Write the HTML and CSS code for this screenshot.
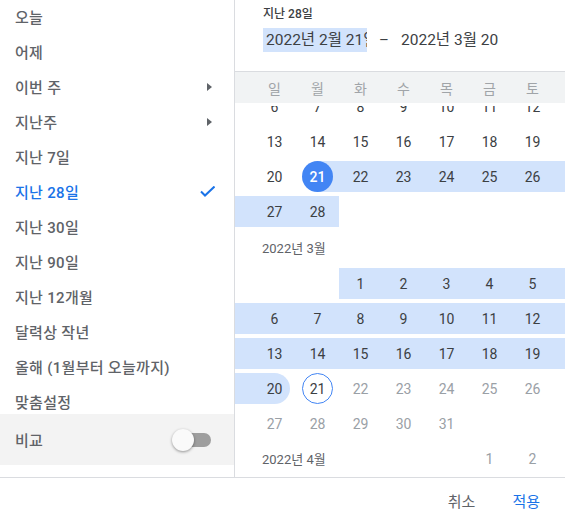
FILE: index.html
```html
<!DOCTYPE html>
<html lang="ko">
<head>
<meta charset="utf-8">
<title>날짜 범위</title>
<link rel="stylesheet" href="styles.css">
</head>
<body>
<div class="app">
  <div class="main">
    <aside class="presets">
      <ul class="preset-list">
        <li class="item">오늘</li>
        <li class="item">어제</li>
        <li class="item">이번 주<span class="caret"></span></li>
        <li class="item">지난주<span class="caret"></span></li>
        <li class="item">지난 7일</li>
        <li class="item selected">지난 28일<svg class="check" width="15" height="11" viewBox="0 0 15 11"><path d="M1 5.5 L5 9.5 L14.5 0.5" fill="none" stroke="#1a73e8" stroke-width="2"/></svg></li>
        <li class="item">지난 30일</li>
        <li class="item">지난 90일</li>
        <li class="item">지난 12개월</li>
        <li class="item">달력상 작년</li>
        <li class="item">올해 (1월부터 오늘까지)</li>
        <li class="item">맞춤설정</li>
      </ul>
      <div class="compare">
        <span>비교</span>
        <span class="toggle"><span class="track"></span><span class="thumb"></span></span>
      </div>
    </aside>

    <section class="cal-pane">
      <div class="range-head">
        <div class="range-label">지난 28일</div>
        <div class="range-fields">
          <span class="date-field selected-text">2022년 2월 21일</span>
          <span class="dash">–</span>
          <span class="date-field second">2022년 3월 20일</span>
        </div>
      </div>
      <div class="row weekdays">
        <span></span><span class="wd">일</span><span class="wd">월</span><span class="wd">화</span><span class="wd">수</span><span class="wd">목</span><span class="wd">금</span><span class="wd">토</span><span></span>
      </div>
      <div class="cal-view">
        <div class="cal-inner">
          <div class="row">
            <span></span><span class="d">6</span><span class="d">7</span><span class="d">8</span><span class="d">9</span><span class="d">10</span><span class="d">11</span><span class="d">12</span><span></span>
          </div>
          <div class="row">
            <span></span><span class="d">13</span><span class="d">14</span><span class="d">15</span><span class="d">16</span><span class="d">17</span><span class="d">18</span><span class="d">19</span><span></span>
          </div>
          <div class="row">
            <span></span><span class="d">20</span><span class="d start"><span class="dot">21</span></span><span class="d in">22</span><span class="d in">23</span><span class="d in">24</span><span class="d in">25</span><span class="d in">26</span><span class="in"></span>
          </div>
          <div class="row">
            <span class="in"></span><span class="d in">27</span><span class="d in">28</span><span></span><span></span><span></span><span></span><span></span><span></span>
          </div>
          <div class="month-label">2022년 3월</div>
          <div class="row">
            <span></span><span></span><span></span><span class="d in">1</span><span class="d in">2</span><span class="d in">3</span><span class="d in">4</span><span class="d in">5</span><span class="in"></span>
          </div>
          <div class="row">
            <span class="in"></span><span class="d in">6</span><span class="d in">7</span><span class="d in">8</span><span class="d in">9</span><span class="d in">10</span><span class="d in">11</span><span class="d in">12</span><span class="in"></span>
          </div>
          <div class="row">
            <span class="in"></span><span class="d in">13</span><span class="d in">14</span><span class="d in">15</span><span class="d in">16</span><span class="d in">17</span><span class="d in">18</span><span class="d in">19</span><span class="in"></span>
          </div>
          <div class="row">
            <span class="in"></span><span class="d end"><span class="pill">20</span></span><span class="d"><span class="today">21</span></span><span class="d off">22</span><span class="d off">23</span><span class="d off">24</span><span class="d off">25</span><span class="d off">26</span><span></span>
          </div>
          <div class="row">
            <span></span><span class="d off">27</span><span class="d off">28</span><span class="d off">29</span><span class="d off">30</span><span class="d off">31</span><span></span><span></span><span></span>
          </div>
          <div class="row">
            <span></span><span class="inline-label">2022년 4월</span><span class="d off">1</span><span class="d off">2</span><span></span>
          </div>
        </div>
      </div>
    </section>
  </div>

  <footer class="actions">
    <button class="btn cancel">취소</button>
    <button class="btn apply">적용</button>
  </footer>
</div>
</body>
</html>
```

FILE: styles.css
```css
* {
  box-sizing: border-box;
  margin: 0;
  padding: 0;
}

html,
body {
  width: 565px;
  height: 519px;
  overflow: hidden;
  background: #ffffff;
}

body {
  font-family: Roboto, "Noto Sans CJK KR", sans-serif;
  color: #3c4043;
}

.app {
  display: flex;
  flex-direction: column;
  height: 519px;
}

.main {
  display: flex;
  height: 478px;
  border-bottom: 1px solid #dadce0;
}

/* ---------- presets ---------- */
.presets {
  width: 235px;
  flex: none;
  border-right: 1px solid #dadce0;
  display: flex;
  flex-direction: column;
}

.preset-list {
  list-style: none;
  height: 414px;
  overflow: hidden;
}

.item {
  height: 35px;
  display: flex;
  align-items: center;
  justify-content: space-between;
  padding: 0 22px 0 15px;
  font-size: 15px;
  font-weight: 500;
  letter-spacing: 0.3px;
  color: #5f6368;
  white-space: nowrap;
}

.item:first-child {
  margin-top: -1px;
}

.item.selected {
  color: #1a73e8;
  padding-right: 19px;
}

.caret {
  width: 0;
  height: 0;
  border-left: 5px solid #5f6368;
  border-top: 4px solid transparent;
  border-bottom: 4px solid transparent;
}

.check {
  display: block;
}

.compare {
  height: 51px;
  background: #f3f3f3;
  display: flex;
  align-items: center;
  justify-content: space-between;
  padding: 0 22px 0 15px;
  font-size: 15px;
  font-weight: 500;
  letter-spacing: 0.3px;
  color: #5f6368;
}

.toggle {
  position: relative;
  width: 40px;
  height: 22px;
  display: flex;
  align-items: center;
}

.track {
  margin-left: 6px;
  width: 33px;
  height: 14px;
  border-radius: 7px;
  background: #9e9e9e;
}

.thumb {
  position: absolute;
  left: 0;
  top: 0;
  width: 22px;
  height: 22px;
  border-radius: 50%;
  background: #fafafa;
  box-shadow: 0 1px 3px rgba(0, 0, 0, 0.4);
}

/* ---------- calendar ---------- */
.cal-pane {
  flex: 1;
  display: flex;
  flex-direction: column;
  min-width: 0;
}

.range-head {
  height: 72px;
  flex: none;
  border-bottom: 1px solid #dadce0;
  padding: 7px 0 0 28px;
}

.range-label {
  font-size: 12px;
  line-height: 14px;
  font-weight: 500;
  color: #3c4043;
}

.range-fields {
  margin-top: 7px;
  display: flex;
  align-items: center;
  gap: 12px;
  font-size: 15.5px;
  color: #3c4043;
}

.date-field {
  display: block;
  width: 104px;
  height: 24px;
  line-height: 24px;
  padding-left: 3px;
  overflow: hidden;
  white-space: nowrap;
}

.date-field.selected-text {
  background: #d2e3fc;
}

.date-field.second {
  width: 100px;
  padding-left: 2px;
}

.dash {
  width: 8px;
  text-align: center;
  font-size: 15px;
}

.row {
  display: grid;
  grid-template-columns: 18px repeat(7, 43px) 1fr;
  padding: 2px 0;
  height: 35px;
}

.weekdays {
  flex: none;
  height: 31px;
  padding: 0;
  background: #f1f3f4;
}

.wd {
  display: flex;
  align-items: center;
  justify-content: center;
  font-size: 14px;
  color: #a0a4a8;
}

.cal-view {
  flex: 1;
  margin-top: 3px;
  overflow: hidden;
}

.cal-inner {
  margin-top: -17px;
}

.d {
  height: 31px;
  display: flex;
  align-items: center;
  justify-content: center;
  font-size: 14px;
  color: #3c4043;
}

.in {
  background: #d2e3fc;
}

.off {
  color: #9aa0a6;
}

.start {
  background: linear-gradient(to right, transparent 50%, #d2e3fc 50%);
}

.end {
  background: linear-gradient(to right, #d2e3fc 50%, transparent 50%);
}

.dot,
.pill,
.today {
  width: 31px;
  height: 31px;
  border-radius: 50%;
  display: flex;
  align-items: center;
  justify-content: center;
}

.dot {
  background: #4285f4;
  color: #ffffff;
  font-weight: 500;
}

.pill {
  background: #d2e3fc;
}

.today {
  border: 1px solid #4285f4;
}

.month-label {
  height: 37px;
  display: flex;
  align-items: center;
  padding-left: 27px;
  font-size: 13px;
  color: #5f6368;
}

.inline-label {
  grid-column: 2 / span 5;
  display: flex;
  align-items: center;
  padding-left: 9px;
  font-size: 13px;
  color: #5f6368;
}

/* ---------- footer ---------- */
.actions {
  height: 41px;
  display: flex;
  justify-content: flex-end;
  align-items: center;
  gap: 37px;
  padding: 6px 25px 0 0;
}

.btn {
  border: none;
  background: none;
  font-family: Roboto, "Noto Sans CJK KR", sans-serif;
  font-size: 15px;
  font-weight: 400;
  line-height: 20px;
  cursor: pointer;
}

.cancel {
  color: #5f6368;
}

.apply {
  color: #1a73e8;
}
```
